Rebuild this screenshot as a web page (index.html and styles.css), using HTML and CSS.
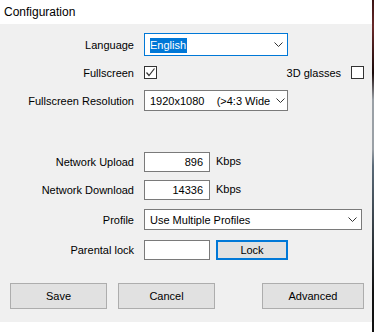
FILE: index.html
```html
<!DOCTYPE html>
<html lang="en">
<head>
  <meta charset="UTF-8" />
  <title>Configuration</title>
  <link rel="stylesheet" href="styles.css">
</head>
<body>
  <div class="screen">
    <div class="window">
      <div class="titlebar">Configuration</div>
      <div class="panel">
        <div class="row row-language">
          <span class="label">Language</span>
          <div class="combo combo-focus">
            <span class="combo-text"><span class="selected">English</span></span>
            <svg class="arrow" width="9" height="5" viewBox="0 0 9 5"><polyline points="0.5,0.5 4.5,4.5 8.5,0.5" fill="none" stroke="#333" stroke-width="1"/></svg>
          </div>
        </div>

        <div class="row row-fullscreen">
          <span class="label">Fullscreen</span>
          <span class="check">
            <svg width="11" height="11" viewBox="0 0 11 11"><polyline points="1.5,5.5 4,8.5 9.5,1.5" fill="none" stroke="#333" stroke-width="1.2"/></svg>
          </span>
          <span class="right-label">3D glasses</span>
          <span class="check"></span>
        </div>

        <div class="row row-resolution">
          <span class="label">Fullscreen Resolution</span>
          <div class="combo">
            <span class="combo-text">1920x1080&nbsp;&nbsp;&nbsp;&nbsp;(&gt;4:3 Wide</span>
            <svg class="arrow" width="9" height="5" viewBox="0 0 9 5"><polyline points="0.5,0.5 4.5,4.5 8.5,0.5" fill="none" stroke="#333" stroke-width="1"/></svg>
          </div>
        </div>

        <div class="row row-upload">
          <span class="label">Network Upload</span>
          <div class="field num">896</div>
          <span class="unit">Kbps</span>
        </div>

        <div class="row row-download">
          <span class="label">Network Download</span>
          <div class="field num">14336</div>
          <span class="unit">Kbps</span>
        </div>

        <div class="row row-profile">
          <span class="label">Profile</span>
          <div class="combo combo-wide">
            <span class="combo-text">Use Multiple Profiles</span>
            <svg class="arrow" width="9" height="5" viewBox="0 0 9 5"><polyline points="0.5,0.5 4.5,4.5 8.5,0.5" fill="none" stroke="#333" stroke-width="1"/></svg>
          </div>
        </div>

        <div class="row row-lock">
          <span class="label">Parental lock</span>
          <div class="field"></div>
          <button class="btn btn-lock">Lock</button>
        </div>

        <div class="buttons">
          <button class="btn btn-big">Save</button>
          <button class="btn btn-big">Cancel</button>
          <button class="btn btn-big btn-adv">Advanced</button>
        </div>
      </div>
      <div class="bottom"></div>
    </div>
    <div class="edge"></div>
  </div>
</body>
</html>
```

FILE: styles.css
```css
* {
  margin: 0;
  padding: 0;
  box-sizing: border-box;
}
body {
  font-family: 'Liberation Sans', Arial, sans-serif;
  font-size: 11px;
  color: #000;
  background: #fff;
}
.screen {
  display: flex;
  height: 332px;
}
.window {
  width: 372px;
  display: flex;
  flex-direction: column;
}
.edge {
  width: 2px;
  background: linear-gradient(180deg, #3a1414 0%, #6a2a2a 8%, #1a0a0a 22%, #9aa0a6 30%, #9aa0a6 45%, #5a6a78 50%, #111 88%, #111 100%);
}
.titlebar {
  height: 24px;
  background: #fff;
  font-size: 12px;
  padding: 5px 0 0 4px;
}
.panel {
  background: #f0f0f0;
  height: 298px;
  padding-top: 9px;
}
.bottom {
  flex: 1;
  background: #fff;
}

/* rows */
.row {
  display: flex;
  align-items: center;
  padding-right: 8px;
}
.label {
  width: 134px;
  text-align: right;
  margin-right: 10px;
  white-space: nowrap;
}
.row-language { height: 23px; }
.row-fullscreen { height: 13px; margin-top: 10px; }
.row-resolution { height: 21px; margin-top: 11px; }
.row-upload { height: 20px; margin-top: 41px; }
.row-download { height: 20px; margin-top: 8px; }
.row-profile { height: 21px; margin-top: 9px; }
.row-lock { height: 20px; margin-top: 10px; }

/* combos */
.combo {
  width: 144px;
  height: 100%;
  background: #fff;
  border: 1px solid #7a7a7a;
  display: flex;
  align-items: center;
  padding: 0 4px 0 5px;
}
.combo-focus {
  border-color: #0078d7;
}
.combo-wide {
  width: 218px;
}
.combo-text {
  flex: 1;
  white-space: nowrap;
}
.selected {
  background: #0078d7;
  color: #fff;
  padding: 1px 1px 2px 0;
}
.arrow {
  margin-left: 6px;
  flex: none;
}

/* checkboxes */
.check {
  width: 13px;
  height: 13px;
  border: 1px solid #333;
  background: #fff;
  display: flex;
  align-items: center;
  justify-content: center;
}
.right-label {
  margin-left: auto;
  margin-right: 10px;
}

/* text fields */
.field {
  width: 66px;
  height: 100%;
  background: #fff;
  border: 1px solid #7a7a7a;
  display: flex;
  align-items: center;
  padding: 0 6px;
}
.num {
  justify-content: flex-end;
}
.unit {
  margin-left: 6px;
  margin-top: -3px;
}

/* buttons */
.btn {
  font-family: inherit;
  font-size: 11px;
  color: #000;
  background: #e1e1e1;
  border: 1px solid #adadad;
}
.btn-lock {
  width: 72px;
  height: 100%;
  margin-left: 6px;
  border: 2px solid #0078d7;
}
.buttons {
  display: flex;
  margin-top: 23px;
  padding: 0 8px 0 10px;
}
.btn-big {
  width: 97px;
  height: 26px;
  margin-right: 11px;
}
.btn-adv {
  width: 102px;
  margin: 0 0 0 auto;
}
```
